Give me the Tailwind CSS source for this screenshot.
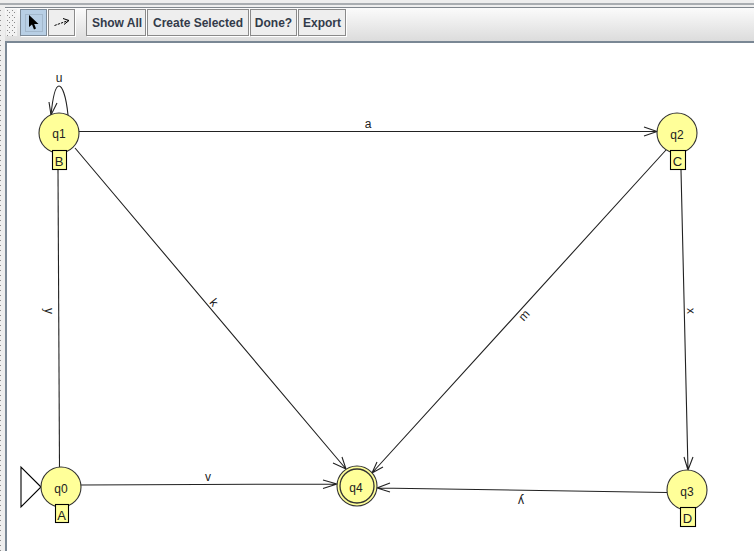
<!DOCTYPE html>
<html>
<head>
<meta charset="utf-8">
<script src="https://cdn.jsdelivr.net/npm/@tailwindcss/browser@4"></script>
</head>
<body class="m-0 bg-[#eeeeee] overflow-hidden">
<div class="w-[754px] h-[551px] flex flex-col bg-[#eeeeee] font-['Liberation_Sans',Arial,sans-serif]">
  <div class="h-[7px] shrink-0 pt-[3px]"><div class="h-[2px] bg-[#a9adb1]"></div></div>
  <div class="flex-1 flex min-h-0">
    <div class="w-[5px] shrink-0 pt-[3px] bg-[#eeeeee]">
      <div class="w-px h-full bg-[repeating-linear-gradient(to_bottom,#8f8f8f_0_1px,transparent_1px_5px)]"></div>
    </div>
    <div class="flex-1 flex flex-col min-w-0">
      <div class="h-[34px] shrink-0 border-t border-[#80878e] bg-linear-to-b from-[#fbfbfb] to-[#dcdcdc] flex items-start pt-px pl-px relative">
        <svg width="11" height="27" class="mr-[3px] bg-[#f2f2f2] shrink-0">
          <defs><pattern id="grip" width="5" height="5" patternUnits="userSpaceOnUse"><rect x="1" y="1" width="1" height="1" fill="#8a8a8a"/><rect x="3" y="3" width="1" height="1" fill="#8a8a8a"/></pattern></defs>
          <rect width="11" height="27" fill="url(#grip)"/>
        </svg>
        <button class="w-[27px] h-[27px] mr-px bg-[#b8cfe5] border border-[#7d8b99] shadow-[1px_1px_0_#fff] flex items-center justify-center p-0">
          <span class="w-[18px] h-[18px] border border-[#a3b8cc] flex items-center justify-center">
            <svg width="10" height="15" viewBox="0 0 10 15" class="ml-px"><path d="M0 0 L0 12 L3 9.5 L5 14.5 L7 13.5 L5.2 9 L9.5 9 Z" fill="#000"/></svg>
          </span>
        </button>
        <button class="w-[27px] h-[27px] mr-[11px] bg-[#eeeeee] border border-[#8a8a8a] shadow-[1px_1px_0_#fff] flex items-center justify-center p-0">
          <svg width="16" height="9" viewBox="0 0 16 9" fill="none" stroke="#000" stroke-width="1"><path d="M0.5 7.5 L14.5 2.5" stroke-dasharray="2.4 1"/><path d="M9 0.5 L15 2.5 L10 6.5"/></svg>
        </button>
        <button class="h-[27px] w-[60px] mr-px border border-[#8a8a8a] bg-[#eeeeee] shadow-[1px_1px_0_#fff] text-[12px] font-bold text-[#333b4a] pl-[2px]">Show All</button>
        <button class="h-[27px] w-[102px] mr-px border border-[#8a8a8a] bg-[#eeeeee] shadow-[1px_1px_0_#fff] text-[12px] font-bold text-[#333b4a] p-0">Create Selected</button>
        <button class="h-[27px] w-[47px] mr-px border border-[#8a8a8a] bg-[#eeeeee] shadow-[1px_1px_0_#fff] text-[12px] font-bold text-[#333b4a] p-0">Done?</button>
        <button class="h-[27px] w-[48px] border border-[#8a8a8a] bg-[#eeeeee] shadow-[1px_1px_0_#fff] text-[12px] font-bold text-[#333b4a] p-0">Export</button>
      </div>
      <div class="flex-1 bg-white border-t-2 border-l-2 border-[#7a8794] overflow-hidden">
        <svg width="747" height="508" viewBox="7 43 747 508" class="block" font-family="'Liberation Sans',Arial,sans-serif" font-size="12">
          <g fill="none" stroke="#222" stroke-width="1.1">
            <path d="M79 131.5 L657 131.5 M644 127 L657 131.5 L644 136"/>
            <path d="M75 148 L346 469 M333 463 L346 469 L342 457"/>
            <path d="M58 170 L59.5 467"/>
            <path d="M666 150 L372 473 M377 462 L372 473 L383 467"/>
            <path d="M681 170 L688 470 M684 457 L688 470 L693 457"/>
            <path d="M81 485 L337 484 M323 480 L337 484 L323 488.5"/>
            <path d="M667 492.5 L377 488 M390 483 L377 488 L390 492"/>
            <path d="M51 115 C53 95 56 86 59 86 C62 86 66 95 68 115"/>
            <path d="M49 102 L51 115 L57 103"/>
            <path d="M41 487 L21 467 L21 507 L41 487 Z" stroke="#000"/>
          </g>
          <g fill="#ffff99" stroke="#333" stroke-width="1.1">
            <circle cx="59" cy="133" r="20"/>
            <circle cx="677" cy="133" r="20"/>
            <circle cx="61" cy="487" r="20"/>
            <circle cx="687" cy="490" r="20"/>
            <circle cx="357" cy="486" r="20"/>
            <circle cx="357" cy="486" r="17" fill="none" stroke-width="1.3"/>
            <rect x="52.5" y="150.5" width="14" height="19" stroke="#000"/>
            <rect x="670.5" y="150.5" width="15" height="19" stroke="#000"/>
            <rect x="55.5" y="504.5" width="13" height="18" stroke="#000"/>
            <rect x="680.5" y="507.5" width="15" height="19" stroke="#000"/>
          </g>
          <g fill="#222" text-anchor="middle">
            <text x="59" y="138">q1</text>
            <text x="677" y="139">q2</text>
            <text x="61" y="493">q0</text>
            <text x="687" y="496">q3</text>
            <text x="356" y="492">q4</text>
            <text x="59" y="166" font-size="13">B</text>
            <text x="677.5" y="166" font-size="13">C</text>
            <text x="61.5" y="520" font-size="13">A</text>
            <text x="687.5" y="523" font-size="13">D</text>
            <text x="59" y="82">u</text>
            <text x="368" y="128">a</text>
            <text x="208" y="481">v</text>
            <text transform="translate(521 497) rotate(180)">y</text>
            <text transform="translate(45 311) rotate(90)">y</text>
            <text transform="translate(211 305) rotate(50)">k</text>
            <text transform="translate(527 318) rotate(-48)">m</text>
            <text transform="translate(687 311) rotate(88)">x</text>
          </g>
        </svg>
      </div>
    </div>
  </div>
</div>
</body>
</html>
